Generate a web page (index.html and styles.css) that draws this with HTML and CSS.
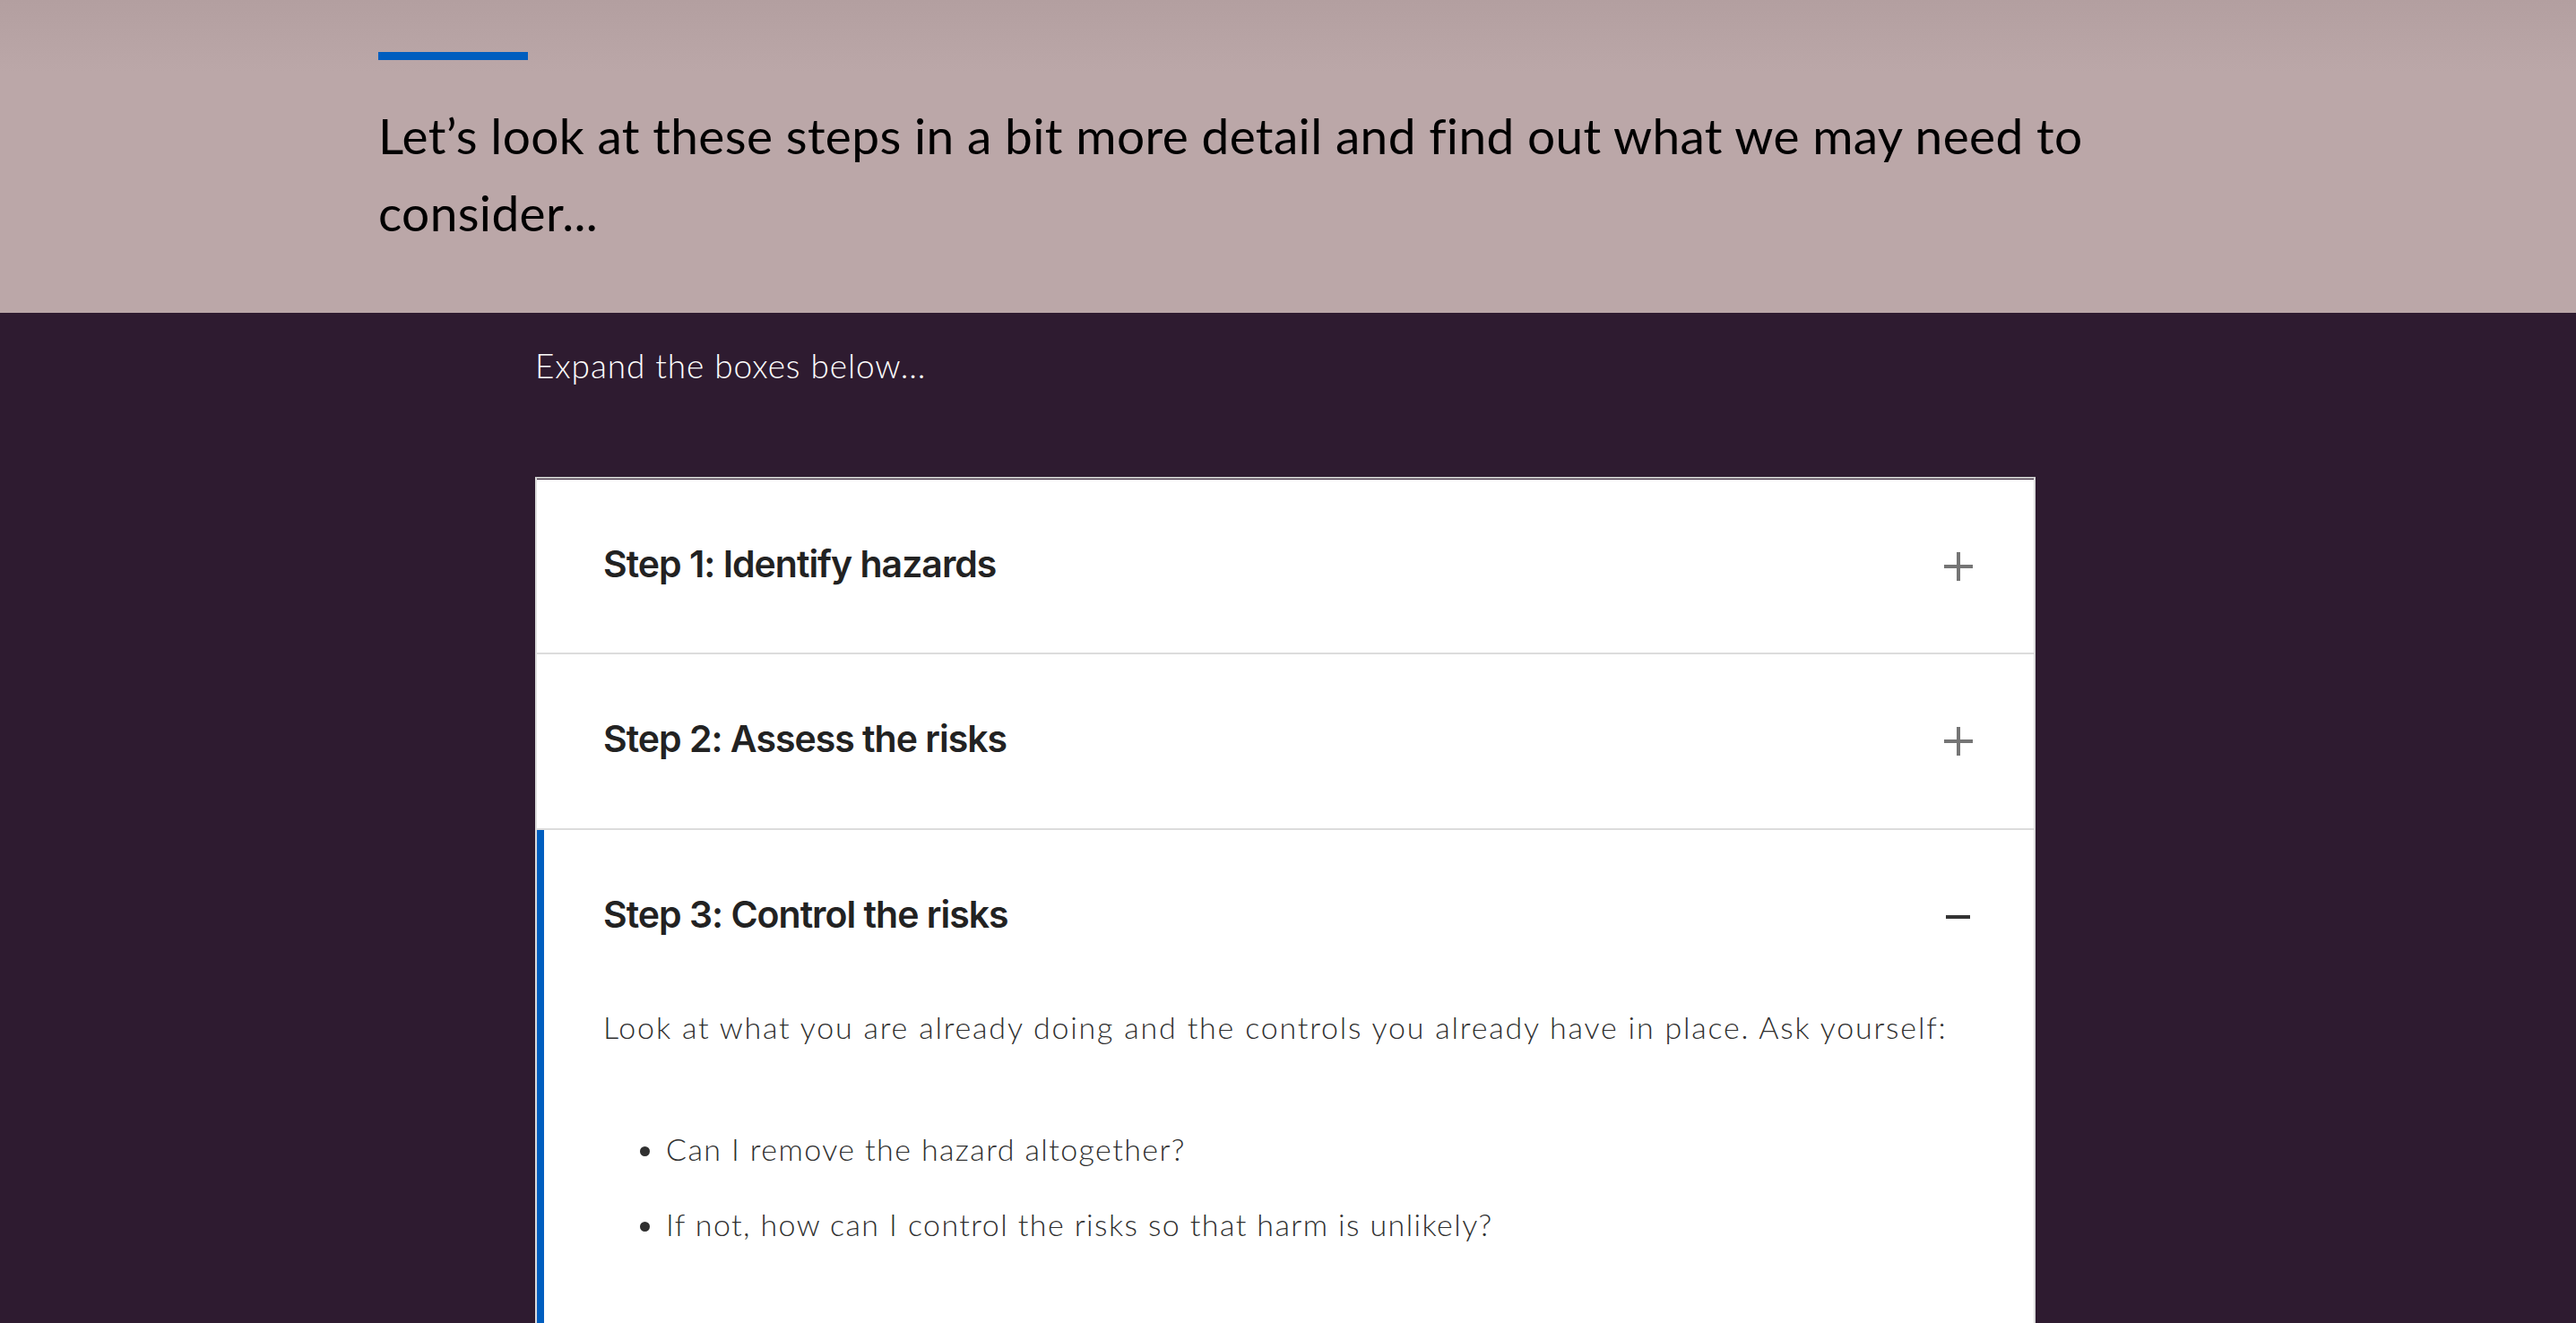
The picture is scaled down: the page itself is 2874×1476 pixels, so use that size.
FILE: index.html
```html
<!DOCTYPE html>
<html lang="en">
<head>
<meta charset="utf-8">
<title>Steps</title>
<link rel="stylesheet" href="styles.css">
</head>
<body>
<section class="intro">
  <div class="intro-inner">
    <div class="accent-bar"></div>
    <h2 class="intro-title">Let’s look at these steps in a bit more detail and find out what we may need to consider...</h2>
  </div>
</section>
<section class="main">
  <div class="main-inner">
    <p class="lead">Expand the boxes below...</p>
    <div class="accordion">
      <div class="acc-item first">
        <div class="acc-head">
          <h3 class="acc-title">Step 1: Identify hazards</h3>
          <svg class="acc-icon plus" width="32" height="32" viewBox="0 0 32 32"><path d="M16 0V32M0 16H32" stroke="#757575" stroke-width="4" fill="none"/></svg>
        </div>
      </div>
      <div class="acc-item">
        <div class="acc-head">
          <h3 class="acc-title">Step 2: Assess the risks</h3>
          <svg class="acc-icon plus" width="32" height="32" viewBox="0 0 32 32"><path d="M16 0V32M0 16H32" stroke="#757575" stroke-width="4" fill="none"/></svg>
        </div>
      </div>
      <div class="acc-item open">
        <div class="acc-head">
          <h3 class="acc-title">Step 3: Control the risks</h3>
          <svg class="acc-icon minus" width="32" height="32" viewBox="0 0 32 32"><path d="M2 16H29" stroke="#333333" stroke-width="4" fill="none"/></svg>
        </div>
        <div class="acc-body">
          <p>Look at what you are already doing and the controls you already have in place. Ask yourself:</p>
          <ul>
            <li>Can I remove the hazard altogether?</li>
            <li>If not, how can I control the risks so that harm is unlikely?</li>
          </ul>
        </div>
      </div>
    </div>
  </div>
</section>
</body>
</html>
```

FILE: styles.css
```css
html, body {
  margin: 0;
  padding: 0;
}
body {
  background: #2e1b30;
  font-family: "Lato", "Noto Sans", sans-serif;
  height: 1476px;
  overflow: hidden;
}
.intro {
  background: linear-gradient(#b39fa0 0px, #bba7a8 80px, #bba7a8 100%);
  padding: 58px 0 69px;
}
.intro-inner {
  width: 2030px;
  margin: 0 auto;
}
.accent-bar {
  width: 167px;
  height: 9px;
  background: #005ebf;
  margin-bottom: 41px;
}
.intro-title {
  margin: 0;
  font-size: 55px;
  line-height: 86px;
  font-weight: 400;
  letter-spacing: 0.35px;
  color: #000;
}
.main-inner {
  width: 1674px;
  margin-left: calc(50% - 840px);
}
.lead {
  margin: 0;
  padding-top: 31px;
  font-size: 37px;
  line-height: 55px;
  font-weight: 300;
  letter-spacing: 0.9px;
  color: #fff;
}
.accordion {
  margin-top: 97px;
  background: #fff;
  border: 2px solid #dcdcdc;
  border-top-color: #c4c4c4;
}
.acc-item {
  border-bottom: 2px solid #dcdcdc;
}
.acc-item.first {
  border-top: 1px solid #2e1b30;
}
.acc-item.first .acc-head {
  height: 193px;
}
.acc-item.open {
  border-left: 8px solid #005ebf;
  border-bottom: none;
}
.acc-head {
  display: flex;
  align-items: center;
  justify-content: space-between;
  height: 194px;
  padding: 0 68px 0 74px;
}
.open .acc-head {
  padding-left: 66px;
}
.acc-title {
  margin: 0 0 6px;
  font-family: "Inter", "Noto Sans", sans-serif;
  font-weight: 600;
  font-size: 41px;
  letter-spacing: -1px;
  color: #222;
}
.acc-icon {
  display: block;
  flex: none;
}
.acc-body {
  padding: 0 68px 120px 66px;
  color: #303030;
  font-size: 34px;
  font-weight: 300;
  line-height: 51px;
  letter-spacing: 1.8px;
}
.acc-body p {
  margin: 0;
}
.acc-body ul {
  margin: 85px 0 0;
  padding-left: 70px;
  letter-spacing: 1.4px;
}
.acc-body li {
  margin-bottom: 33px;
}
```
